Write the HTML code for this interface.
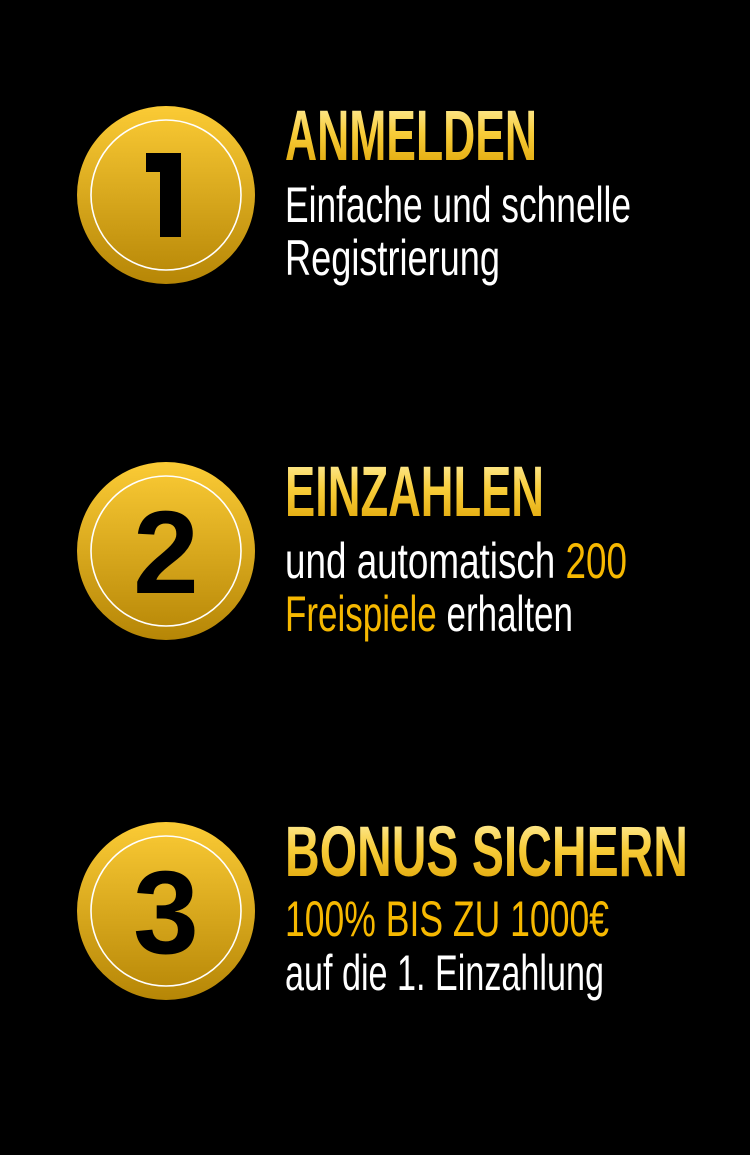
<!DOCTYPE html>
<html><head><meta charset="utf-8"><style>
html,body{margin:0;padding:0;background:#000;}
svg{display:block;}
text{font-family:"Liberation Sans Narrow","Liberation Sans",sans-serif;}
.h{font-weight:bold;font-size:71px;fill:url(#tg);}
.b{font-size:50px;fill:#fff;}
.g{fill:#f6b800;}
.n{font-family:"Liberation Sans",sans-serif;font-weight:bold;font-size:118px;fill:#000;}
</style></head><body>
<svg width="750" height="1155" viewBox="0 0 750 1155" xmlns="http://www.w3.org/2000/svg">
<defs>
<linearGradient id="cg" x1="0" y1="0" x2="0" y2="1">
<stop offset="0" stop-color="#fbcb35"/><stop offset="1" stop-color="#b68606"/>
</linearGradient>
<linearGradient id="tg" x1="0" y1="0" x2="0" y2="1">
<stop offset="0" stop-color="#fff2b0"/><stop offset="0.45" stop-color="#f8cd3a"/><stop offset="1" stop-color="#dca000"/>
</linearGradient>
</defs>
<rect width="750" height="1155" fill="#000"/>
<g>
<circle cx="166" cy="195" r="89" fill="url(#cg)"/>
<circle cx="166" cy="195" r="75" fill="none" stroke="#fff" stroke-width="1.6"/>
<path d="M146 153H181V237H160V172H146Z" fill="#000"/>
<circle cx="166" cy="551" r="89" fill="url(#cg)"/>
<circle cx="166" cy="551" r="75" fill="none" stroke="#fff" stroke-width="1.6"/>
<text class="n" x="166" y="593" text-anchor="middle">2</text>
<circle cx="166" cy="911" r="89" fill="url(#cg)"/>
<circle cx="166" cy="911" r="75" fill="none" stroke="#fff" stroke-width="1.6"/>
<text class="n" x="166" y="953" text-anchor="middle">3</text>
</g>
<text class="h" x="285" y="160" textLength="252" lengthAdjust="spacingAndGlyphs">ANMELDEN</text>
<text class="b" x="285" y="222" textLength="346" lengthAdjust="spacingAndGlyphs">Einfache und schnelle</text>
<text class="b" x="285" y="275" textLength="215" lengthAdjust="spacingAndGlyphs">Registrierung</text>

<text class="h" x="285" y="516" textLength="259" lengthAdjust="spacingAndGlyphs">EINZAHLEN</text>
<text class="b" x="285" y="578" textLength="342" lengthAdjust="spacingAndGlyphs">und automatisch <tspan class="g">200</tspan></text>
<text class="b" x="285" y="631" textLength="288" lengthAdjust="spacingAndGlyphs"><tspan class="g">Freispiele</tspan> erhalten</text>

<text class="h" x="285" y="876" textLength="403" lengthAdjust="spacingAndGlyphs">BONUS SICHERN</text>
<text class="b g" x="285" y="936" textLength="324" lengthAdjust="spacingAndGlyphs">100% BIS ZU 1000€</text>
<text class="b" x="285" y="990" textLength="319" lengthAdjust="spacingAndGlyphs">auf die 1. Einzahlung</text>
</svg>
</body></html>
